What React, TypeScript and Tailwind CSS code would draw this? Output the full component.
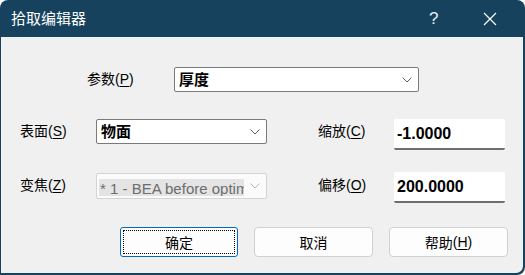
import React from "react";

const cjk = { fontFamily: '"Noto Sans CJK SC", "Liberation Sans", sans-serif' };
const latin = { fontFamily: '"Liberation Sans", "Noto Sans CJK SC", sans-serif' };

function Chevron({ color = "#5f5f5f" }: { color?: string }) {
  return (
    <svg width="10" height="6" viewBox="0 0 10 6" fill="none">
      <path d="M0.5 0.5 L5 5 L9.5 0.5" stroke={color} strokeWidth="1" />
    </svg>
  );
}

function Label({ text, hot }: { text: string; hot: string }) {
  return (
    <div className="text-[14px] leading-[20px] text-black whitespace-nowrap" style={cjk}>
      {text}
      <span style={latin}>
        (<span className="underline underline-offset-2">{hot}</span>)
      </span>
    </div>
  );
}

export default function App() {
  return (
    <div className="w-[525px] h-[275px] bg-white">
      <div className="w-[525px] h-[275px] bg-[#16425e] rounded-t-[8px] rounded-br-[8px] flex flex-col">
        {/* title bar */}
        <div className="h-[37px] flex items-center pl-[11px] text-white">
          <div className="text-[15px] flex-1" style={cjk}>拾取编辑器</div>
          <div className="text-[17px] w-[20px] mr-[34px] text-[#e8eef2]" style={latin}>?</div>
          <svg width="14" height="14" viewBox="0 0 14 14" className="mr-[28px]">
            <path d="M1 1 L13 13 M13 1 L1 13" stroke="#ffffff" strokeWidth="1.2" />
          </svg>
        </div>

        {/* body */}
        <div className="flex-1 ml-[1px] mr-[2px] mb-[2px] bg-[#f0f0f0] rounded-br-[7px] flex flex-col">
          {/* 参数 */}
          <div className="flex items-start mt-[30px]">
            <div className="ml-[86px] w-[87px] pt-[1px]">
              <Label text="参数" hot="P" />
            </div>
            <div className="w-[245px] h-[25px] bg-white border border-[#7a7a7a] rounded-[2px] flex items-center pl-[4px] pr-[6px]">
              <span className="flex-1 text-[15px] font-bold text-black" style={cjk}>厚度</span>
              <Chevron />
            </div>
          </div>

          {/* 表面 / 缩放 */}
          <div className="flex items-start mt-[27px]">
            <div className="ml-[19px] w-[76px] pt-[1px]">
              <Label text="表面" hot="S" />
            </div>
            <div className="w-[171px] h-[25px] bg-white border border-[#7a7a7a] rounded-[2px] flex items-center pl-[4px] pr-[6px]">
              <span className="flex-1 text-[15px] font-bold text-black" style={cjk}>物面</span>
              <Chevron />
            </div>
            <div className="ml-[51px] w-[76px] pt-[1px]">
              <Label text="缩放" hot="C" />
            </div>
            <div className="w-[111px] h-[31px] bg-white border-b-[2px] border-[#6e6e6e] rounded-[2px] flex items-center pl-[3px]">
              <span className="text-[16px] font-bold text-black" style={latin}>-1.0000</span>
            </div>
          </div>

          {/* 变焦 / 偏移 */}
          <div className="flex items-start mt-[22px]">
            <div className="ml-[19px] w-[76px] pt-[2px]">
              <Label text="变焦" hot="Z" />
            </div>
            <div className="w-[171px] h-[26px] mt-[1px] bg-[#fbfbfb] border border-[#d4d4d4] rounded-[2px] flex items-center pl-[2px] pr-[6px] overflow-hidden">
              <div className="flex-1 h-[20px] overflow-hidden mr-[6px]">
                <span
                  className="inline-block h-[20px] leading-[20px] bg-[#e4e4e4] text-[15px] text-[#6d6d6d] whitespace-nowrap pl-[1px]"
                  style={latin}
                >
                  * 1 - BEA before optim
                </span>
              </div>
              <Chevron color="#b8b8b8" />
            </div>
            <div className="ml-[51px] w-[76px] pt-[2px]">
              <Label text="偏移" hot="O" />
            </div>
            <div className="w-[111px] h-[31px] bg-white border-b-[2px] border-[#6e6e6e] rounded-[2px] flex items-center pl-[3px]">
              <span className="text-[16px] font-bold text-black" style={latin}>200.0000</span>
            </div>
          </div>

          {/* buttons */}
          <div className="flex mt-[24px] ml-[119px] gap-[16px]">
            <button className="w-[118px] h-[30px] bg-[#fdfdfd] border border-[#0067c0] rounded-[3px] p-[2px]">
              <div
                className="w-full h-full border border-dotted border-black flex items-center justify-center text-[14px] text-black"
                style={cjk}
              >
                确定
              </div>
            </button>
            <button
              className="w-[119px] h-[30px] bg-[#fdfdfd] border border-[#d0d0d0] rounded-[4px] flex items-center justify-center text-[14px] text-black"
              style={cjk}
            >
              取消
            </button>
            <button
              className="w-[119px] h-[30px] bg-[#fdfdfd] border border-[#d0d0d0] rounded-[4px] flex items-center justify-center text-[14px] text-black"
              style={cjk}
            >
              帮助<span style={latin}>(<span className="underline underline-offset-2">H</span>)</span>
            </button>
          </div>
        </div>
      </div>
    </div>
  );
}
